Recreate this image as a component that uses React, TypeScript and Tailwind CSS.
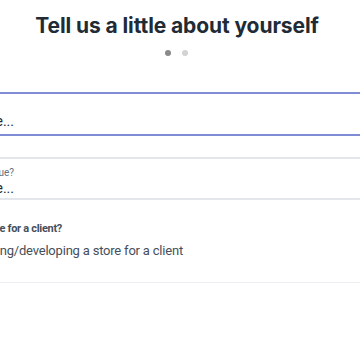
import React from "react";

function Clip({ end, className, children }: { end: string; className: string; children: React.ReactNode }) {
  return (
    <div className={"flex justify-end whitespace-nowrap " + end}>
      <span className={className}>{children}</span>
    </div>
  );
}

export default function App() {
  return (
    <div className="w-[360px] h-[360px] overflow-hidden bg-white" style={{ fontFamily: "Roboto, 'Liberation Sans', sans-serif" }}>
      <h1
        className="pt-[13px] pr-[6px] text-center text-[21px] leading-[26px] font-bold text-[#212b36] tracking-[-0.1px]"
        style={{ fontFamily: "Inter, 'Liberation Sans', sans-serif" }}
      >
        Tell us a little about yourself
      </h1>
      <div className="mt-[11px] flex justify-center gap-[11px] pr-[7px]">
        <span className="h-[6px] w-[6px] rounded-full bg-[#8a8a8a]" />
        <span className="h-[6px] w-[6px] rounded-full bg-[#d3d3d3]" />
      </div>
      <div className="mt-[36px] h-[44px] border-y-2 border-[#7f8bd4] pt-[18px]">
        <Clip end="w-[14px]" className="text-[14px] leading-[18px] text-[#212b36]">Choose one...</Clip>
      </div>
      <div className="mt-[21px] h-[43px] border-y-2 border-[#e3e7eb] pt-[7px]">
        <Clip end="w-[14px]" className="text-[10px] leading-[13px] text-[#637381]">What is your current revenue?</Clip>
        <Clip end="w-[14px]" className="text-[14px] leading-[18px] text-[#212b36]">Choose one...</Clip>
      </div>
      <div className="mt-[21px]">
        <Clip end="w-[62px]" className="text-[11px] leading-[16px] font-bold text-[#454f5b] tracking-[-0.3px]">Are you setting up a store for a client?</Clip>
        <Clip end="w-[183px] mt-[4px]" className="text-[13px] leading-[20px] text-[#454f5b] tracking-[-0.2px]">Yes, I'm designing/developing a store for a client</Clip>
      </div>
      <div className="mt-[21px] border-t border-[#ebeef0]" />
    </div>
  );
}
